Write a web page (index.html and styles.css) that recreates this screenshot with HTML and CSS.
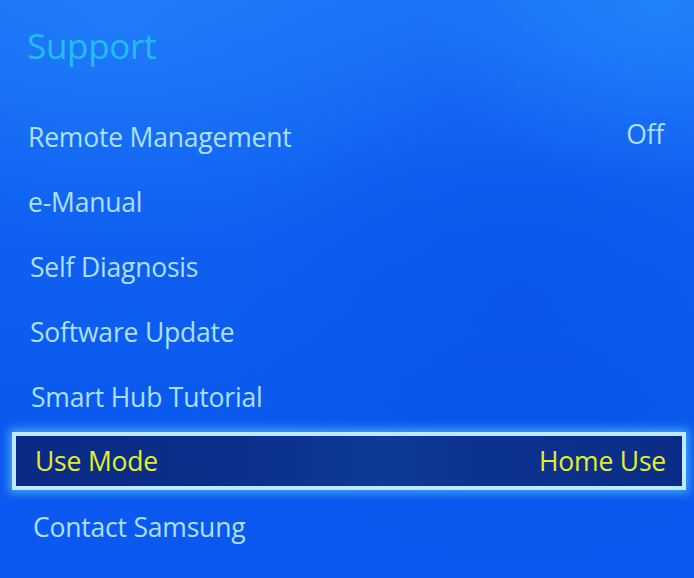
FILE: index.html
```html
<!DOCTYPE html>
<html lang="en">
<head>
<meta charset="utf-8">
<title>Support</title>
<link rel="stylesheet" href="styles.css">
</head>
<body>
<main class="screen">
  <h1 class="title">Support</h1>
  <ul class="menu">
    <li class="item"><span class="label">Remote Management</span><span class="value">Off</span></li>
    <li class="item"><span class="label">e-Manual</span></li>
    <li class="item"><span class="label">Self Diagnosis</span></li>
    <li class="item"><span class="label">Software Update</span></li>
    <li class="item"><span class="label">Smart Hub Tutorial</span></li>
    <li class="item item--focused"><span class="label">Use Mode</span><span class="value">Home Use</span></li>
    <li class="item"><span class="label">Contact Samsung</span></li>
  </ul>
</main>
</body>
</html>
```

FILE: styles.css
```css
html, body {
  margin: 0;
  padding: 0;
  height: 100%;
}

body {
  font-family: "Open Sans", "Noto Sans", sans-serif;
  background: #0b5af0;
  overflow: hidden;
}

.screen {
  height: 578px;
  box-sizing: border-box;
  padding-top: 22px;
  background:
    radial-gradient(ellipse 360px 220px at 120px 30px, rgba(40, 140, 255, 0.4), rgba(40, 140, 255, 0) 100%),
    radial-gradient(ellipse 240px 180px at 660px 10px, rgba(40, 150, 255, 0.45), rgba(40, 150, 255, 0) 100%),
    radial-gradient(ellipse 300px 260px at 520px 300px, rgba(8, 70, 225, 0.35), rgba(8, 70, 225, 0) 100%),
    linear-gradient(180deg, #1a72f5 0%, #1062f2 30%, #0b5aef 70%, #0a58f0 100%);
}

.title {
  margin: 0 0 34px 27px;
  font-size: 35px;
  line-height: 48px;
  font-weight: 400;
  color: #22bdf4;
  letter-spacing: -0.3px;
}

.menu {
  list-style: none;
  margin: 0;
  padding: 0;
  display: flex;
  flex-direction: column;
}

.item {
  height: 65px;
  margin: 0 12px;
  padding: 0 18px 0 16px;
  display: flex;
  align-items: center;
  justify-content: space-between;
  font-size: 26.5px;
  letter-spacing: -0.2px;
  color: #ade0fc;
  box-sizing: border-box;
}

.item:nth-child(n+3) { padding-left: 18px; }
.item:nth-child(n+5) { padding-left: 19px; }
.item:nth-child(n+7) { padding-left: 21px; }
.item:nth-child(1) .value { margin-top: -6px; }

.item--focused {
  height: 58px;
  margin: 3px 8px 4px 12px;
  padding: 0 16px 0 17px;
  border: 4px solid #bfe9ff;
  color: #e4ee2a;
  background: linear-gradient(90deg, #092a84 0%, #0b2f8c 35%, #0e3a97 55%, #0c3290 70%, #0a2c86 100%);
  box-shadow: 0 0 9px 3px rgba(90, 200, 255, 0.7);
}
```
